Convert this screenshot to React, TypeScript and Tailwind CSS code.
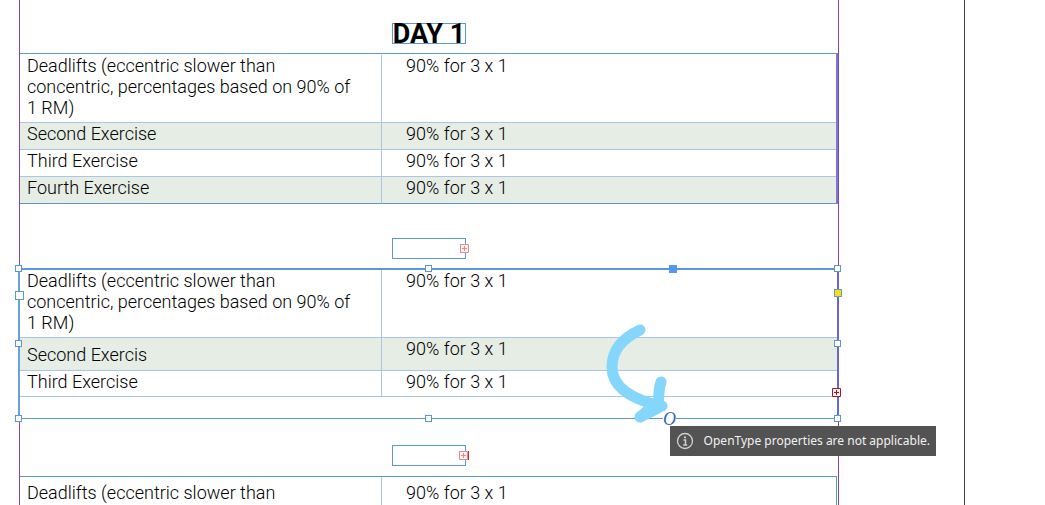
import clsx from "clsx";
import type { ReactNode } from "react";

interface Row {
  exercise: string;
  load: string;
}

const DEADLIFTS =
  "Deadlifts (eccentric slower than concentric, percentages based on 90% of 1 RM)";
const LOAD = "90% for 3 x 1";

const dayOne: Row[] = [
  { exercise: DEADLIFTS, load: LOAD },
  { exercise: "Second Exercise", load: LOAD },
  { exercise: "Third Exercise", load: LOAD },
  { exercise: "Fourth Exercise", load: LOAD },
];

const dayTwo: Row[] = [
  { exercise: DEADLIFTS, load: LOAD },
  { exercise: "Second Exercis", load: LOAD },
  { exercise: "Third Exercise", load: LOAD },
];

const dayThree: Row[] = [
  { exercise: "Deadlifts (eccentric slower than", load: LOAD },
];

function ExerciseTable({
  rows,
  heights,
  closed = false,
  roomy = false,
}: {
  rows: Row[];
  heights: string[];
  closed?: boolean;
  roomy?: boolean;
}) {
  return (
    <table className="w-full table-fixed border-separate border-spacing-0 text-left text-lg leading-[21px] font-light">
      <colgroup>
        <col className="w-[362px]" />
        <col />
      </colgroup>
      <tbody>
        {rows.map((row, i) => {
          const last = closed && i === rows.length - 1;
          const cell = clsx(
            "border-b",
            last ? "border-b-[#5f97c8]" : "border-b-[#a9c6e6]",
            roomy && "pt-[5px]",
          );
          return (
            <tr
              key={row.exercise}
              className={clsx(heights[i], i % 2 === 1 && "bg-[#e6ede5]")}
            >
              <td
                className={clsx(
                  "border-r border-r-[#a9c6e6] pr-6 pl-[7px]",
                  cell,
                  heights[i] === "h-[33px]" ? "align-middle" : "align-top",
                )}
              >
                {row.exercise}
              </td>
              <td className={clsx("pl-6 align-top", cell)}>{row.load}</td>
            </tr>
          );
        })}
      </tbody>
    </table>
  );
}

function TitleFrame({ children }: { children?: ReactNode }) {
  return (
    <div className="relative h-[21px] w-[74px] self-center border border-[#5b97d0]">
      {children}
    </div>
  );
}

function Overset() {
  return (
    <svg viewBox="0 0 9 9" aria-label="Overset text" className="h-[9px] w-[9px]">
      <path
        d="M.5.5h8v8h-8zM2 4.5h5M4.5 2v5"
        fill="#fff3f3"
        stroke="currentColor"
      />
    </svg>
  );
}

function Handle() {
  return <span className="h-[7px] w-[7px] border border-[#5b97d0] bg-white" />;
}

// Resize handles, spread over the corners and edges of the selected frame
function SelectionHandles() {
  return (
    <div className="absolute -inset-[3px] -right-[2px] flex flex-col justify-between">
      <div className="flex justify-between">
        <Handle />
        <Handle />
        <Handle />
      </div>
      <div className="flex justify-between">
        <Handle />
        <Handle />
      </div>
      <div className="flex justify-between">
        <Handle />
        <Handle />
        <Handle />
      </div>
    </div>
  );
}

export default function App() {
  return (
    <main className="flex h-screen overflow-hidden bg-white font-[Roboto,sans-serif] text-black">
      <div className="mr-20 flex-1 border-r border-[#404040] pr-[125px] pl-[19px]">
        <div className="flex min-h-screen flex-col gap-[26px] border-x border-[#8745a8] pt-[23px]">
          <div className="flex flex-col gap-[9px] pb-2">
            <TitleFrame>
              <h1 className="flex justify-center text-[27px] leading-[21px] font-bold whitespace-nowrap">
                DAY 1
              </h1>
            </TitleFrame>
            <section className="border-t border-r-2 border-t-[#5b97d0] border-r-[#7977da] pt-px">
              <ExerciseTable
                rows={dayOne}
                heights={["h-[68px]", "h-[27px]", "h-[27px]", "h-[27px]"]}
                closed
              />
            </section>
          </div>

          <div className="flex flex-col gap-[9px]">
            <TitleFrame>
              <div className="absolute inset-y-0 -right-1 flex items-center text-[#e08a8a]">
                <Overset />
              </div>
            </TitleFrame>

            <section className="relative -mr-px -ml-0.5 h-[151px]">
              <div className="h-full border-2 border-b border-t-[#5b97e0] border-r-[#6a66d2] border-b-[#5b97d0] border-l-[#6aa2dd]">
                <ExerciseTable
                  rows={dayTwo}
                  heights={["h-[68px]", "h-[33px]", "h-[26px]"]}
                />
              </div>

              <SelectionHandles />
              <span className="absolute top-[23px] -left-[3px] h-[9px] w-[9px] border border-[#5a9fb0] bg-white" />
              <span className="absolute -top-[3px] right-[162px] h-2 w-2 bg-[#5596ee]" />
              <span className="absolute top-[21px] -right-[3px] h-2 w-2 border border-[#6b9bb5] bg-[#f5df1d]" />
              <div className="absolute -right-0.5 bottom-[22px] text-[#a31621]">
                <Overset />
              </div>

              <svg
                viewBox="0 0 64 104"
                aria-hidden="true"
                className="absolute top-[54px] right-[170px] h-[104px] w-16 text-[#85d6fd]"
                fill="none"
                stroke="currentColor"
                strokeWidth="11"
                strokeLinecap="round"
                strokeLinejoin="round"
              >
                <path d="M35 8C18 16 7 28 7 45C7 64 25 77 56 84" />
                <path d="M56 60C53 69 54 76 53 86L35 95L47 85L57 84" />
              </svg>

              <span className="absolute -bottom-2 right-[163px] bg-white font-['Liberation_Serif',serif] text-lg leading-4 text-[#2f66bd] italic">
                O
              </span>

              <div
                role="tooltip"
                className="absolute top-[158px] -right-[97px] flex h-[30px] items-center gap-2.5 bg-[#535353] pr-1.5 pl-1.5 font-['Noto_Sans',sans-serif] text-xs whitespace-nowrap text-[#f2f2f2]"
              >
                <svg
                  viewBox="0 0 18 18"
                  aria-hidden="true"
                  className="h-[18px] w-[18px] text-[#d0d0d0]"
                  fill="none"
                  stroke="currentColor"
                >
                  <circle cx="9" cy="9" r="7.5" strokeWidth="1.3" />
                  <path d="M7.5 8h2v5M7.2 13h4" strokeWidth="1.5" />
                  <path d="M8 5.3h2" strokeWidth="1.8" />
                </svg>
                OpenType properties are not applicable.
              </div>
            </section>
          </div>

          <div className="flex flex-col gap-2.5">
            <TitleFrame>
              <div className="absolute inset-y-0 -right-1 flex items-center text-[#e08a8a]">
                <Overset />
                <span className="h-[9px] w-px bg-[#c22a35]" />
              </div>
            </TitleFrame>
            <section className="mr-px border-t border-r border-[#5b97d0]">
              <ExerciseTable rows={dayThree} heights={["h-[69px]"]} roomy />
            </section>
          </div>
        </div>
      </div>
    </main>
  );
}
